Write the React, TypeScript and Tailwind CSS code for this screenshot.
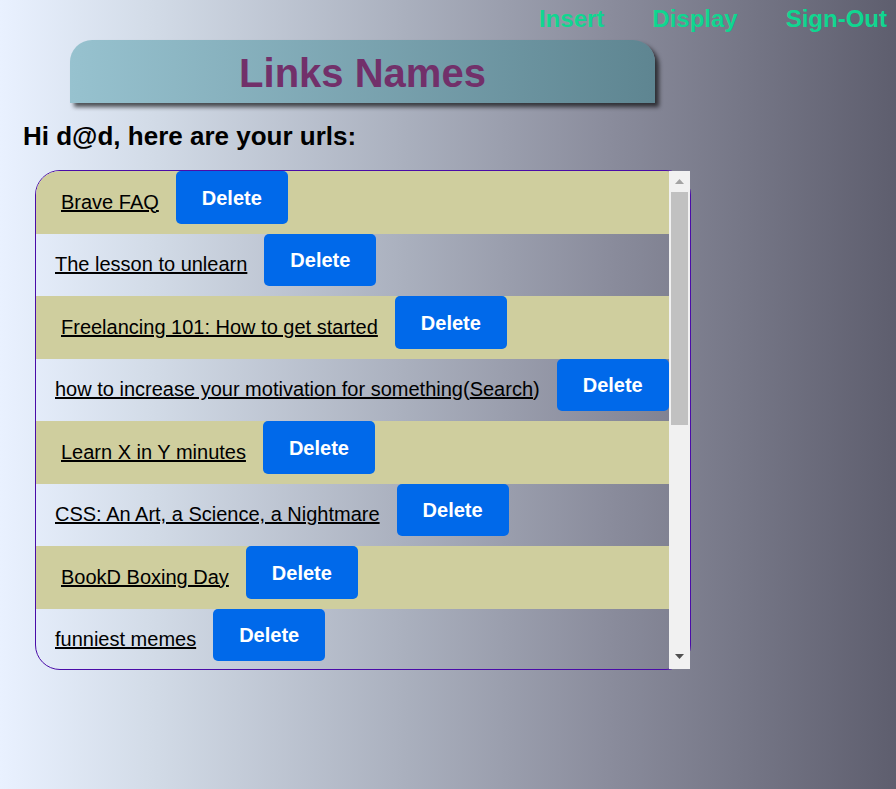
import React from 'react';

type LinkItem = {
  id: number;
  name: string;
  search?: boolean;
};

const links: LinkItem[] = [
  { id: 1, name: 'Brave FAQ' },
  { id: 2, name: 'The lesson to unlearn' },
  { id: 3, name: 'Freelancing 101: How to get started' },
  { id: 4, name: 'how to increase your motivation for something', search: true },
  { id: 5, name: 'Learn X in Y minutes' },
  { id: 6, name: 'CSS: An Art, a Science, a Nightmare' },
  { id: 7, name: 'BookD Boxing Day' },
  { id: 8, name: 'funniest memes' },
];

function ScrollBar() {
  // classic scrollbar look, laid over the list's right edge
  return (
    <div className="absolute top-[1px] right-[1px] bottom-[1px] flex w-[21px] flex-col bg-[#f1f1f1]">
      <div className="flex h-[21px] items-center justify-center">
        <svg width="9" height="5" viewBox="0 0 9 5">
          <path d="M4.5 0 L9 5 L0 5 Z" fill="#a3a3a3" />
        </svg>
      </div>
      <div className="mx-[2px] h-[233px] bg-[#c1c1c1]" />
      <div className="flex-1" />
      <div className="flex h-[21px] items-center justify-center pb-[4px]">
        <svg width="9" height="5" viewBox="0 0 9 5">
          <path d="M0 0 L9 0 L4.5 5 Z" fill="#505050" />
        </svg>
      </div>
    </div>
  );
}

export default function App() {
  return (
    <div
      className="min-h-screen w-full bg-[linear-gradient(to_right,#e9f1ff,#d2dbe7_17%,#aab0be_45%,#8a8c9c_68%,#5e5e6e)] text-black"
      style={{ fontFamily: '"Liberation Sans", Arial, sans-serif' }}
    >
      {/* Nav */}
      <nav className="flex justify-end gap-[48px] pr-[9px] pt-[5px] text-[24px] font-bold leading-[1.15] text-[#10d690]">
        <a href="#">Insert</a>
        <a href="#">Display</a>
        <a href="#">Sign-Out</a>
      </nav>

      {/* Title bar */}
      <div className="ml-[70px] mt-[7px] flex h-[63px] w-[585px] items-center justify-center rounded-t-[22px] bg-[linear-gradient(to_right,#97c2cf,#5e8591)] pt-[3px] shadow-[4px_4px_4px_rgba(0,0,0,0.65)]">
        <h1 className="text-[40px] font-bold leading-[1.15] text-[#72306a]">Links Names</h1>
      </div>

      <h2 className="ml-[23px] mt-[19px] text-[26px] font-bold leading-[1.15]">
        Hi d@d, here are your urls:
      </h2>

      {/* List */}
      <div className="relative ml-[35px] mt-[19px] h-[500px] w-[656px]">
        <ul className="h-full w-full overflow-hidden rounded-[25px] border border-[#4a0ca8]">
          {links.map((link, i) => (
            <li
              key={link.id}
              className={`flex h-[62.5px] items-center gap-[17px] text-[20px] ${
                i % 2 === 0 ? 'bg-[#cfce9e] pl-[25px]' : 'pl-[19px]'
              }`}
            >
              <span className="-mt-[2px]">
                <a href="#" className="underline">
                  {link.name}
                </a>
                {link.search && (
                  <>
                    (
                    <a href="#" className="underline">
                      Search
                    </a>
                    )
                  </>
                )}
              </span>
              <button className="mb-[10px] h-[52.5px] w-[112px] rounded-[5px] bg-[#0069ea] text-[20px] font-bold text-white">
                Delete
              </button>
            </li>
          ))}
        </ul>
        <ScrollBar />
      </div>
    </div>
  );
}
